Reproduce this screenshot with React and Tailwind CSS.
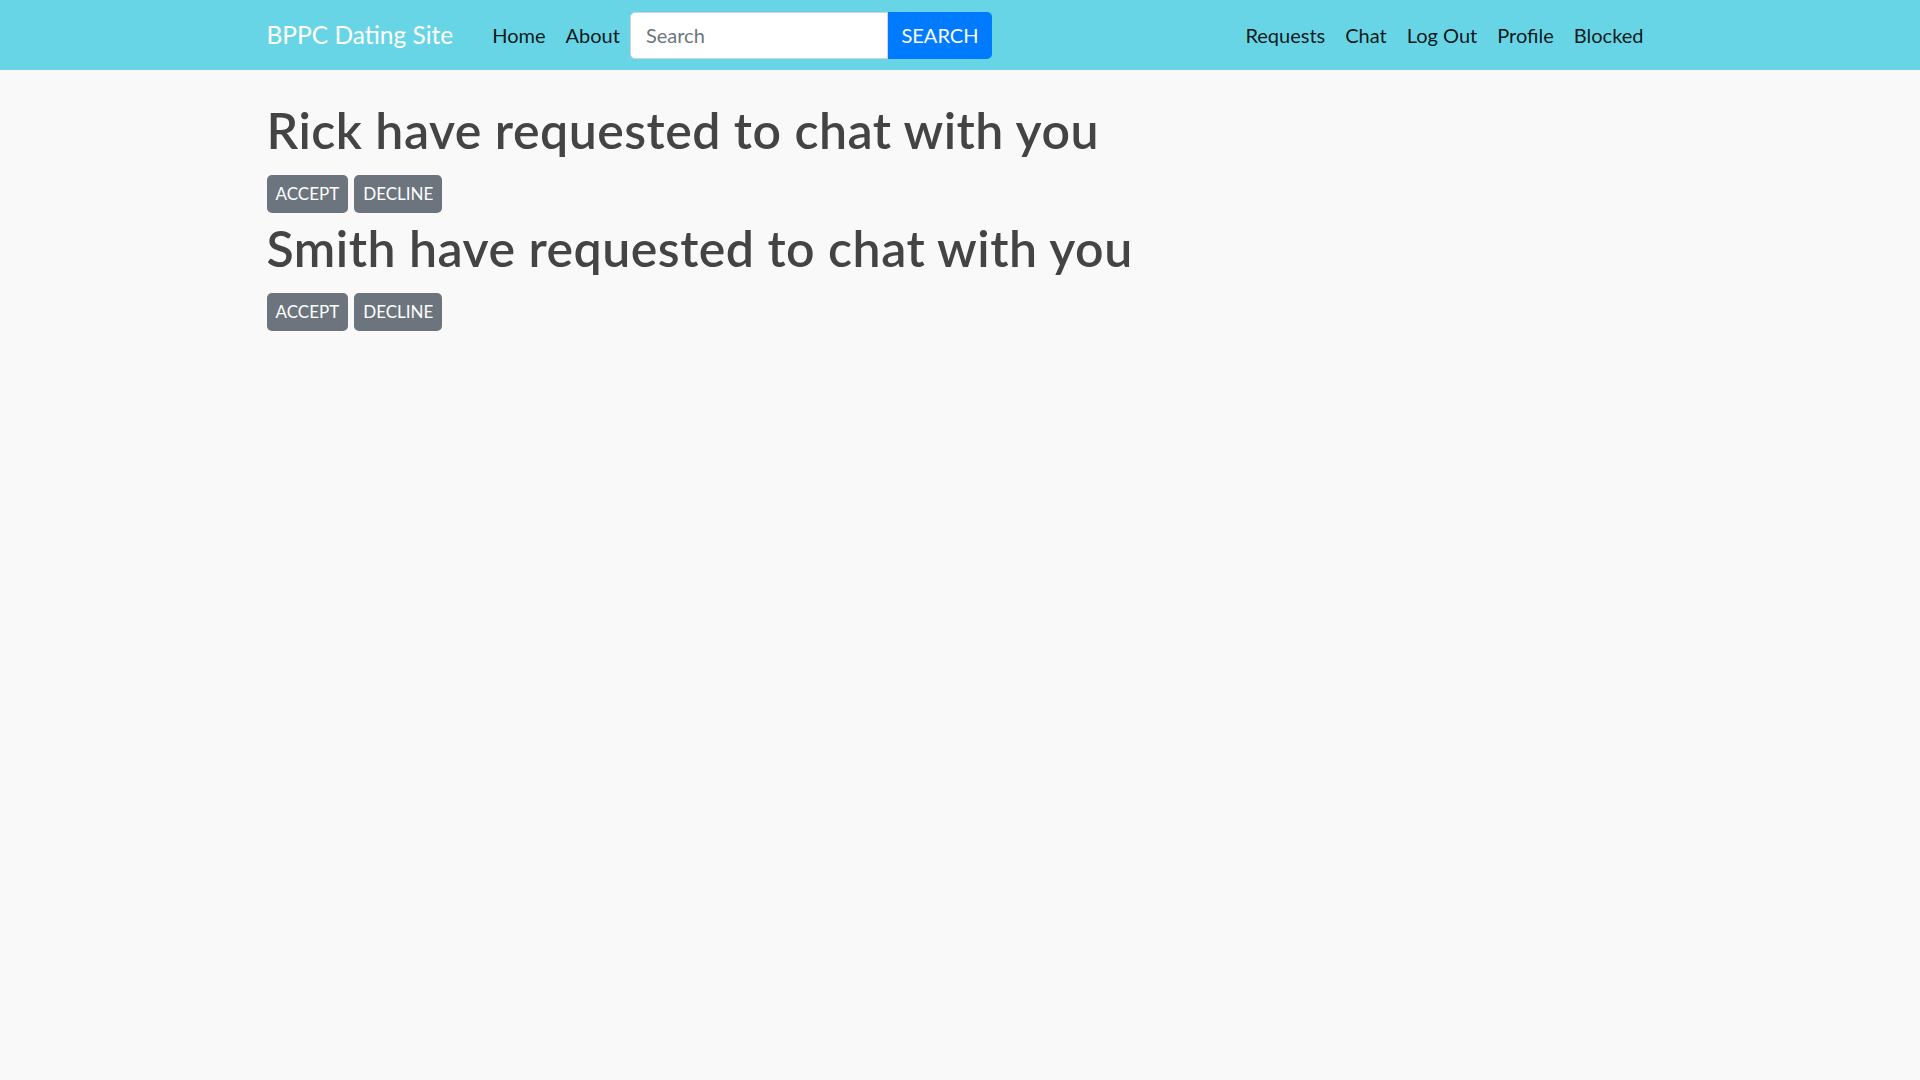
import React from 'react';

const font = { fontFamily: '"Segoe UI", Lato, "Open Sans", sans-serif' };

const requests = ['Rick', 'Smith'];

const NavLink = ({ children }) => (
  <a href="#" className="px-[10px] text-[20px] text-black/90 leading-[30px]">{children}</a>
);

const App = () => {
  return (
    <div className="min-h-screen bg-[#f9f9f9]" style={font}>
      <nav className="h-[70px] bg-[#68d5e6]">
        <div className="w-[1425px] mx-auto px-[19px] h-full flex items-center">
          <a href="#" className="text-[24.5px] text-white leading-[38px] mr-[29px]">BPPC Dating Site</a>
          <NavLink>Home</NavLink>
          <NavLink>About</NavLink>
          <form className="flex items-center" onSubmit={e => e.preventDefault()}>
            <input
              type="text"
              placeholder="Search"
              className="w-[258px] h-[47px] bg-white border border-[#ced4da] rounded-l-[5px] px-[15px] text-[20px] text-[#495057] placeholder:text-[#6c757d] outline-none"
            />
            <button
              type="submit"
              className="h-[47px] w-[104px] bg-[#007bff] text-white text-[20px] rounded-r-[5px] uppercase"
            >
              Search
            </button>
          </form>
          <div className="ml-auto flex items-center">
            <NavLink>Requests</NavLink>
            <NavLink>Chat</NavLink>
            <NavLink>Log Out</NavLink>
            <NavLink>Profile</NavLink>
            <NavLink>Blocked</NavLink>
          </div>
        </div>
      </nav>

      <div className="w-[1425px] mx-auto px-[19px] pt-[30px]">
        {requests.map(name => (
          <div key={name}>
            <h1 className="text-[50px] leading-[60px] font-semibold tracking-[0.5px] text-[#444] mb-[15px]">
              {name} have requested to chat with you
            </h1>
            <div className="flex gap-[6px] mb-[5px]">
              <button className="h-[38px] px-[9px] bg-[#6c757d] text-white text-[17px] rounded-[5px]">ACCEPT</button>
              <button className="h-[38px] px-[9px] bg-[#6c757d] text-white text-[17px] rounded-[5px]">DECLINE</button>
            </div>
          </div>
        ))}
      </div>
    </div>
  );
};

export default App;
